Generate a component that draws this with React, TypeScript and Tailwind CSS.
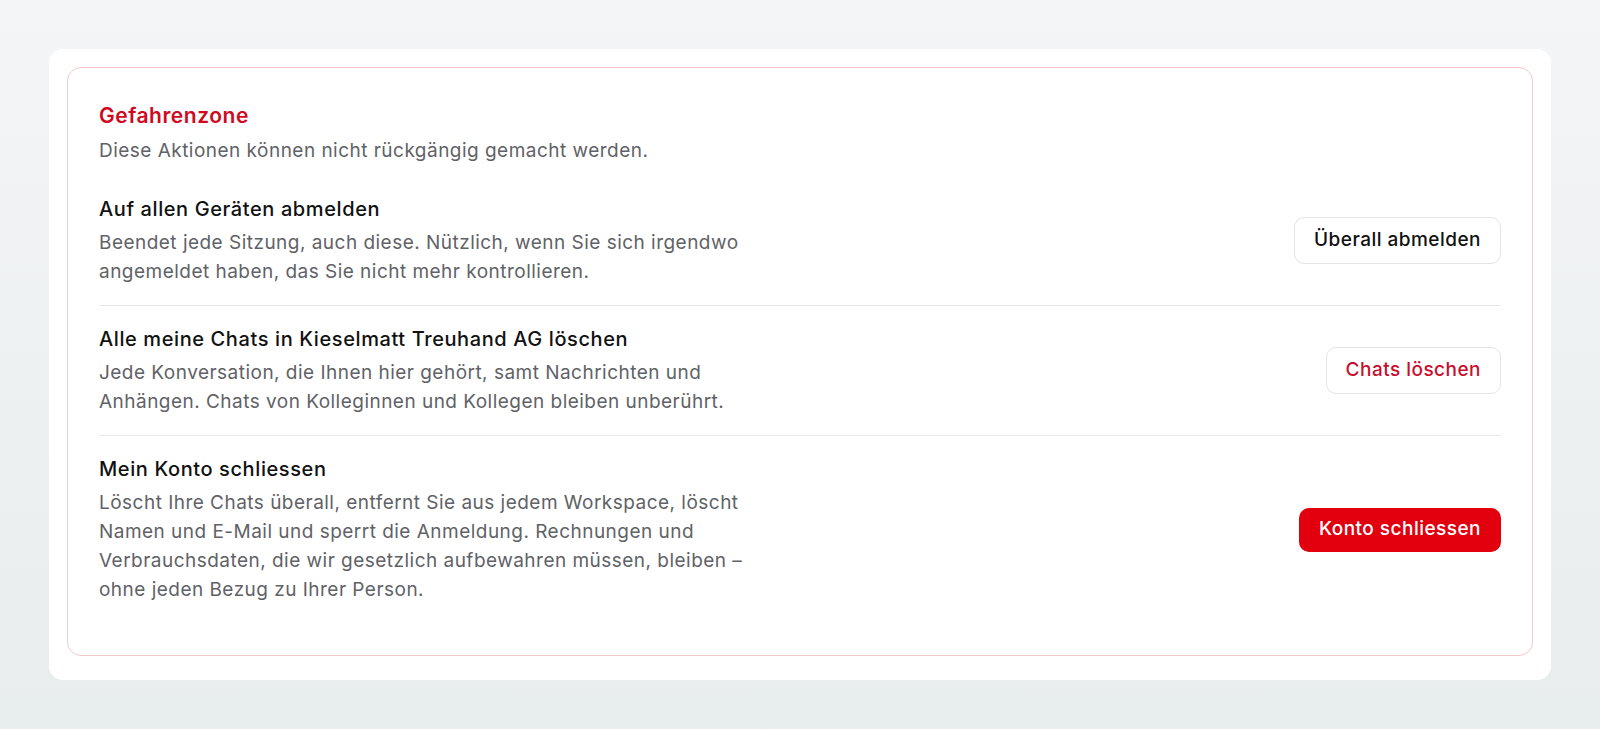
const ACTIONS = [
  {
    id: "signout",
    title: "Auf allen Geräten abmelden",
    text: "Beendet jede Sitzung, auch diese. Nützlich, wenn Sie sich irgendwo angemeldet haben, das Sie nicht mehr kontrollieren.",
    label: "Überall abmelden",
    kind: "neutral",
  },
  {
    id: "chats",
    title: "Alle meine Chats in Kieselmatt Treuhand AG löschen",
    text: "Jede Konversation, die Ihnen hier gehört, samt Nachrichten und Anhängen. Chats von Kolleginnen und Kollegen bleiben unberührt.",
    label: "Chats löschen",
    kind: "outline",
  },
  {
    id: "close",
    title: "Mein Konto schliessen",
    text: "Löscht Ihre Chats überall, entfernt Sie aus jedem Workspace, löscht Namen und E-Mail und sperrt die Anmeldung. Rechnungen und Verbrauchsdaten, die wir gesetzlich aufbewahren müssen, bleiben – ohne jeden Bezug zu Ihrer Person.",
    label: "Konto schliessen",
    kind: "solid",
  },
];

export default function App() {
  return (
    <div
      className="min-h-screen p-[49px] bg-gradient-to-b from-[#f4f5f6] to-[#e8eded]"
      style={{ fontFamily: "Inter, 'Noto Sans', sans-serif" }}
    >
      <div className="bg-white rounded-[14px] px-[18px] pt-[18px] pb-[24px]">
        <div className="border border-[#f0c9cd] rounded-[14px] px-[31px] pt-[34px] pb-[32px]">
          <h2 className="text-[21px] leading-[28px] font-semibold tracking-[0.025em] text-[#cf0a1f]">
            Gefahrenzone
          </h2>
          <p className="mt-[7px] text-[19px] leading-[28px] tracking-[0.025em] text-[#5f6266]">
            Diese Aktionen können nicht rückgängig gemacht werden.
          </p>

          <div className="mt-[11px] divide-y divide-[#e8e8e8]">
            {ACTIONS.map((a) => (
              <div key={a.id} className="flex items-center justify-between py-[19px]">
                <div className="max-w-[672px]">
                  <p className="text-[20px] leading-[28px] font-medium tracking-[0.03em] text-[#111111]">
                    {a.title}
                  </p>
                  <p className="mt-[5px] text-[19px] leading-[29px] tracking-[0.025em] text-[#5f6266]">
                    {a.text}
                  </p>
                </div>
                {a.kind === "neutral" && (
                  <button className="h-[47px] px-[19px] rounded-[10px] border border-[#e3e4e6] bg-white text-[19px] font-medium tracking-[0.025em] text-[#111111]">
                    {a.label}
                  </button>
                )}
                {a.kind === "outline" && (
                  <button className="h-[47px] px-[19px] rounded-[10px] border border-[#e3e4e6] bg-white text-[19px] font-medium tracking-[0.025em] text-[#c8102e]">
                    {a.label}
                  </button>
                )}
                {a.kind === "solid" && (
                  <button className="h-[44px] px-5 rounded-[10px] bg-[#e2000f] text-[19px] font-medium tracking-[0.025em] text-white">
                    {a.label}
                  </button>
                )}
              </div>
            ))}
          </div>
        </div>
      </div>
    </div>
  );
}
